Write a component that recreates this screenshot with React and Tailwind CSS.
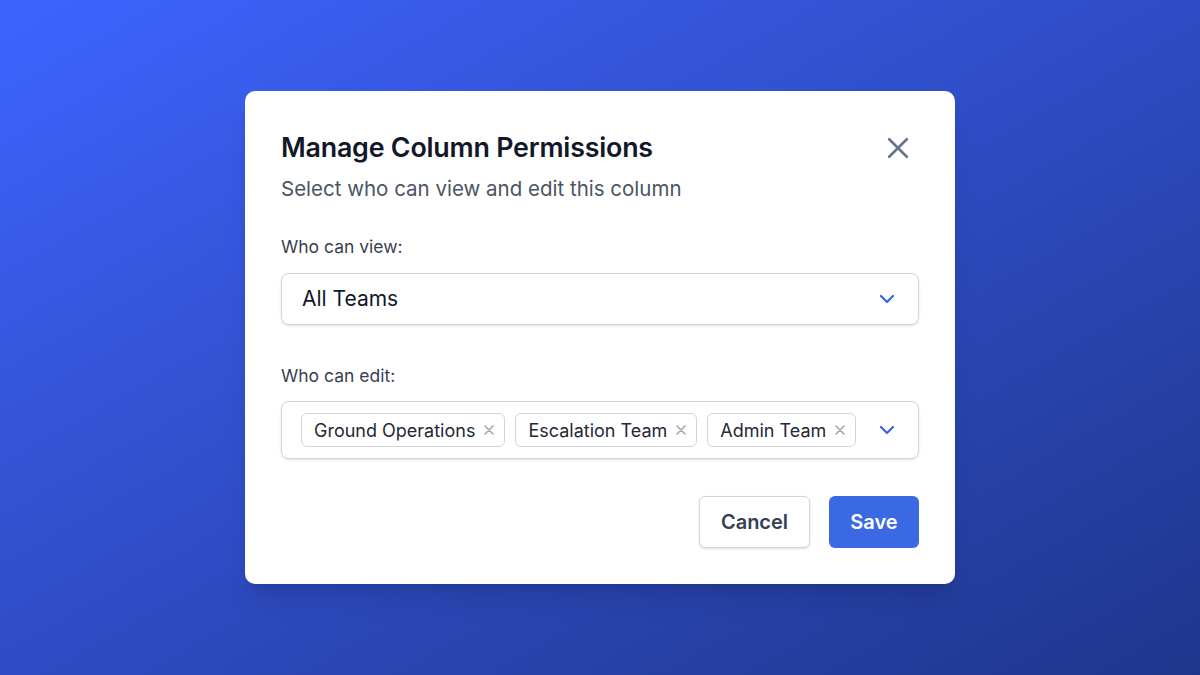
const teams = ['Ground Operations', 'Escalation Team', 'Admin Team'];

function Chevron() {
  return (
    <svg width="16" height="10" viewBox="0 0 16 10" fill="none" className="text-[#3b62e0]">
      <path d="M2 2l6 6 6-6" stroke="currentColor" strokeWidth="2.2" strokeLinecap="round" strokeLinejoin="round" />
    </svg>
  );
}

function Cross({ size, stroke, className }) {
  return (
    <svg width={size} height={size} viewBox="0 0 20 20" fill="none" className={className}>
      <path d="M2 2l16 16M18 2L2 18" stroke="currentColor" strokeWidth={stroke} strokeLinecap="round" />
    </svg>
  );
}

export default function App() {
  return (
    <div
      className="w-[1200px] h-[675px] flex items-center justify-center bg-gradient-to-br from-[#3e64ff] to-[#1f368c]"
      style={{ fontFamily: 'Inter, "Noto Sans", sans-serif' }}
    >
      <div className="w-[710px] bg-white rounded-[10px] shadow-xl px-9 pt-[38px] pb-[36px]">
        <div className="flex items-start justify-between">
          <h2 className="text-[26.8px] leading-[36px] font-semibold text-[#111827] tracking-[-0.2px]">
            Manage Column Permissions
          </h2>
          <button className="mt-[8px] mr-[10px] text-[#64748b]">
            <Cross size={22} stroke={2.4} />
          </button>
        </div>
        <p className="mt-[10px] text-[20.5px] leading-[28px] text-[#4b5563]">
          Select who can view and edit this column
        </p>

        <label className="block mt-[32px] text-[17.5px] leading-[24px] text-[#374151]">Who can view:</label>
        <div className="mt-[14px] h-[52px] border border-[#d1d5db] rounded-[8px] shadow-sm flex items-center justify-between pl-[20px] pr-[23px]">
          <span className="text-[21px] text-[#111827]">All Teams</span>
          <Chevron />
        </div>

        <label className="block mt-[39px] text-[17.5px] leading-[24px] text-[#374151]">Who can edit:</label>
        <div className="mt-[13px] h-[58px] border border-[#d1d5db] rounded-[8px] shadow-sm flex items-center justify-between pl-[19px] pr-[23px]">
          <div className="flex items-center gap-[10px]">
            {teams.map((t) => (
              <span
                key={t}
                className="h-[34px] flex items-center gap-[9px] pl-[12px] pr-[10px] border border-[#d1d5db] rounded-[6px] text-[18px] text-[#1f2937]"
              >
                {t}
                <Cross size={10} stroke={3} className="text-[#9ca3af]" />
              </span>
            ))}
          </div>
          <Chevron />
        </div>

        <div className="mt-[37px] flex justify-end gap-[19px]">
          <button className="w-[111px] h-[52px] border border-[#d1d5db] rounded-[6px] shadow-sm text-[20px] font-semibold text-[#334155] bg-white">
            Cancel
          </button>
          <button className="w-[90px] h-[52px] rounded-[6px] bg-[#3b69e3] text-[20px] font-semibold text-white">
            Save
          </button>
        </div>
      </div>
    </div>
  );
}
